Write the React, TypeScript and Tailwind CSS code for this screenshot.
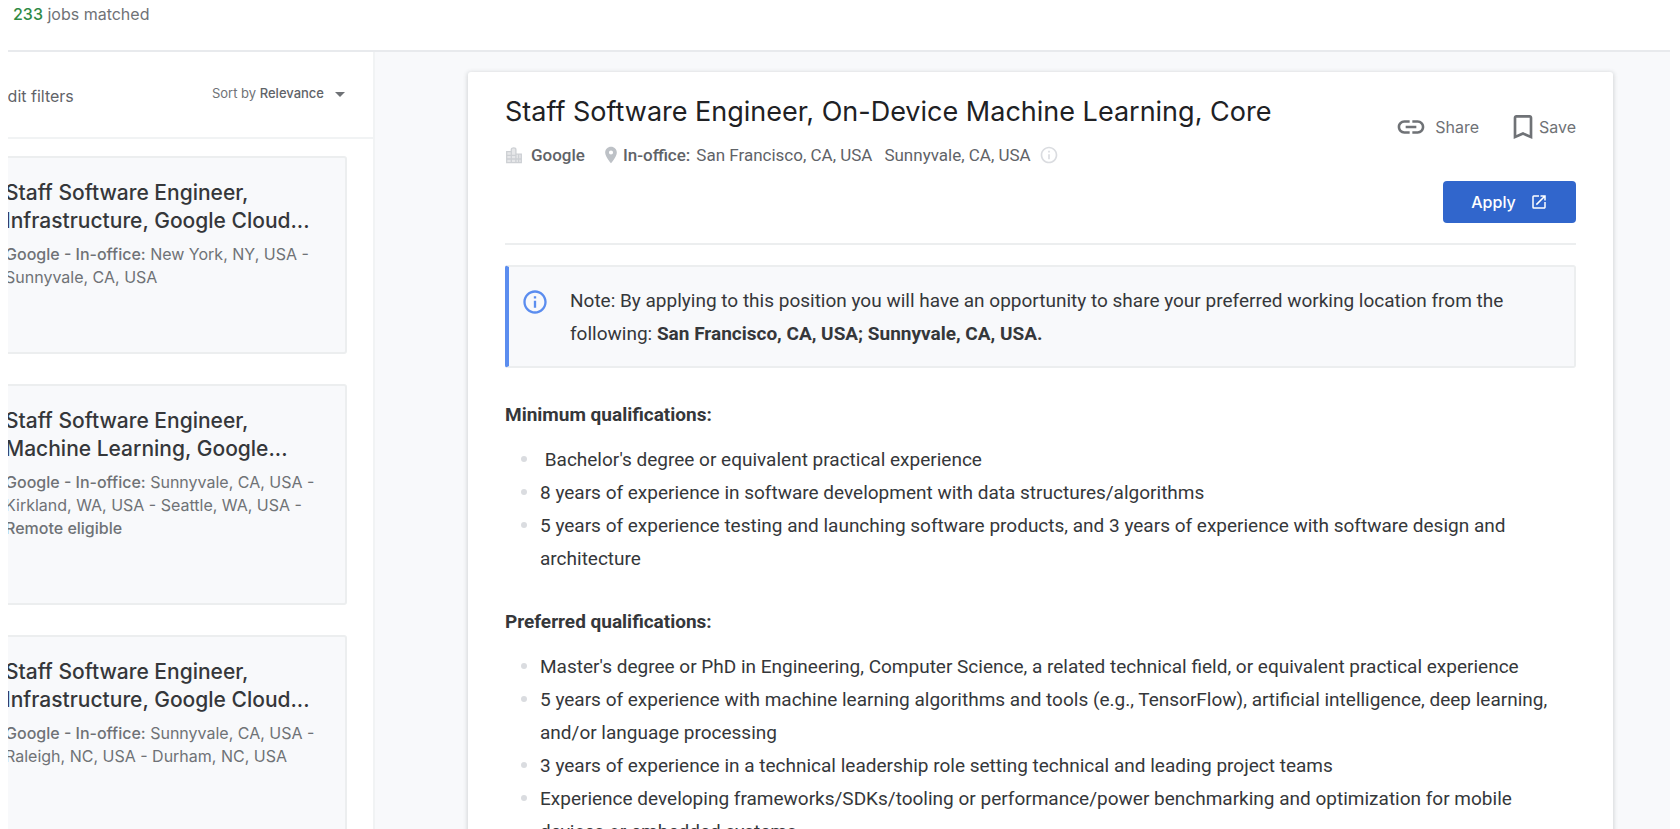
import React from "react";
import { MdArrowDropDown, MdBookmarkBorder, MdInfoOutline, MdLink, MdOpenInNew, MdPlace } from "react-icons/md";

type Job = { title: string; place: string; rest: string; remote?: boolean };

const jobs: Job[] = [
  { title: "Staff Software Engineer, Infrastructure, Google Cloud...", place: "New York, NY, USA -", rest: "Sunnyvale, CA, USA" },
  { title: "Staff Software Engineer, Machine Learning, Google...", place: "Sunnyvale, CA, USA -", rest: "Kirkland, WA, USA - Seattle, WA, USA -", remote: true },
  { title: "Staff Software Engineer, Infrastructure, Google Cloud...", place: "Sunnyvale, CA, USA -", rest: "Raleigh, NC, USA - Durham, NC, USA" },
];

const minimum = [
  "\u00a0Bachelor's degree or equivalent practical experience",
  "8 years of experience in software development with data structures/algorithms",
  "5 years of experience testing and launching software products, and 3 years of experience with software design and architecture",
];

const preferred = [
  "Master's degree or PhD in Engineering, Computer Science, a related technical field, or equivalent practical experience",
  "5 years of experience with machine learning algorithms and tools (e.g., TensorFlow), artificial intelligence, deep learning, and/or language processing",
  "3 years of experience in a technical leadership role setting technical and leading project teams",
  "Experience developing frameworks/SDKs/tooling or performance/power benchmarking and optimization for mobile devices or embedded systems",
];

function BuildingIcon() {
  return (
    <svg viewBox="0 0 18 18" className="size-[18px] shrink-0 text-[#cdd0d4]" fill="none" stroke="currentColor" strokeWidth="1.3" aria-hidden="true">
      <path d="M1.7 5.7h4.6v11H1.7zM6.3 3.4c0-2 4.6-2 4.6 0v13.3H6.3zM10.9 8.2h5.4v8.5h-5.4z" fill="currentColor" fillOpacity=".5" />
      <path d="M1.7 9.3h9.2M1.7 13h14.6M13.6 8.2v8.5" />
    </svg>
  );
}

function JobCard({ job }: { job: Job }) {
  return (
    <article className="rounded-[3px] border-2 border-[#eceeef] bg-[#f8f9fb] pt-[21px] pr-4 pb-[63px] pl-[31px]">
      <h3 className="w-[316px] text-[21px] leading-7 font-medium text-[#35373a]">{job.title}</h3>
      <p className="mt-2 text-[16px] leading-[23px] whitespace-nowrap text-[#6f7276]">
        <span className="font-medium">Google - In-office:</span> {job.place}
        <br />
        {job.rest}
        {job.remote && (
          <>
            <br />
            <span className="font-medium">Remote eligible</span>
          </>
        )}
      </p>
    </article>
  );
}

function Qualifications({ title, items }: { title: string; items: string[] }) {
  return (
    <section className="mt-[30px]">
      <h2 className="text-[19px] leading-[33px] font-bold">{title}</h2>
      <ul className="mt-3 list-none">
        {items.map((item) => (
          <li key={item} className="flex pr-3 text-[19px] leading-[33px]">
            <span className="mt-[13px] mr-[13px] ml-4 size-[6px] shrink-0 rounded-full bg-[#dadce0]" />
            <span>{item}</span>
          </li>
        ))}
      </ul>
    </section>
  );
}

export default function App() {
  return (
    <div className="flex h-screen flex-col overflow-hidden bg-white pr-[10px] pl-2 font-['Inter',sans-serif]">
      <header className="h-[52px] shrink-0 border-b-2 border-[#e8eaed] pl-[5px] text-[16px] leading-7 text-[#6f7276]">
        <span className="font-medium text-[#2f8a45]">233</span> jobs matched
      </header>
      <div className="flex min-h-0 flex-1">
        <aside className="w-[367px] shrink-0 overflow-hidden border-r-2 border-[#f1f3f4]">
          <div className="flex h-[87px] items-center justify-between border-b-2 border-[#f1f3f4] pr-[21px]">
            <button type="button" className="-ml-[10px] pt-[3px] text-[16px] whitespace-nowrap text-[#5f6368]">Edit filters</button>
            <button type="button" className="flex items-center pb-[2px] text-[13px] text-[#6f7276]">
              Sort by&nbsp;<span className="font-medium text-[#5f6368]">Relevance</span>
              <MdArrowDropDown className="ml-1 size-6" />
            </button>
          </div>
          <div className="mt-[17px] mr-[26px] -ml-9 flex flex-col gap-[30px]">
            {jobs.map((job, i) => (
              <JobCard key={i} job={job} />
            ))}
          </div>
        </aside>
        <main className="min-w-0 flex-1 overflow-hidden bg-[#f8f9fb] pt-5 pr-[57px] pl-[93px]">
          <article className="min-h-full rounded-[3px] bg-white px-[37px] pt-5 font-['Roboto',sans-serif] text-[#35373a] shadow-[0_1px_4px_1px_rgba(60,64,67,0.18)]">
            <div className="border-b-2 border-[#eceeef] pb-5">
              <div className="flex justify-between">
                <div>
                  <h1 className="font-['Inter',sans-serif] text-[27px] leading-10 text-[#202124]">Staff Software Engineer, On-Device Machine Learning, Core</h1>
                  <div className="mt-[11px] flex items-center text-[17px] leading-6 whitespace-nowrap text-[#5f6368]">
                    <BuildingIcon />
                    <span className="ml-2 font-medium">Google</span>
                    <MdPlace className="ml-4 size-5 text-[#bdc1c6]" />
                    <span className="ml-[2px] font-medium">In-office:</span>
                    <span className="ml-[6px]">San Francisco, CA, USA</span>
                    <span className="ml-3">Sunnyvale, CA, USA</span>
                    <MdInfoOutline className="ml-2 size-5 text-[#dadce0]" />
                  </div>
                </div>
                <div className="flex items-start pt-[19px] font-['Inter',sans-serif] text-[16px] leading-6 text-[#6f7276]">
                  <button type="button" className="flex items-center gap-2">
                    <MdLink className="size-8" />
                    Share
                  </button>
                  <button type="button" className="ml-7 flex items-center">
                    <MdBookmarkBorder className="size-8" />
                    Save
                  </button>
                </div>
              </div>
              <div className="mt-[14px] flex justify-end">
                <button type="button" className="flex h-[42px] w-[133px] items-center justify-center gap-[14px] rounded bg-[#3166cc] font-['Inter',sans-serif] text-[16px] font-medium text-white">
                  Apply
                  <MdOpenInNew className="size-[18px]" />
                </button>
              </div>
            </div>
            <div className="mt-5 flex rounded-[3px] border-2 border-l-4 border-[#eceeef] border-l-[#5b8def] bg-[#f8f9fb] pt-[17px] pb-[16px] text-[19px] leading-[33px]">
              <MdInfoOutline className="mt-1 ml-3 size-7 shrink-0 text-[#5b8def]" />
              <p className="ml-[21px] pr-16">
                Note: By applying to this position you will have an opportunity to share your preferred working location from the following: <b>San Francisco, CA, USA; Sunnyvale, CA, USA.</b>
              </p>
            </div>
            <Qualifications title="Minimum qualifications:" items={minimum} />
            <Qualifications title="Preferred qualifications:" items={preferred} />
          </article>
        </main>
      </div>
    </div>
  );
}
